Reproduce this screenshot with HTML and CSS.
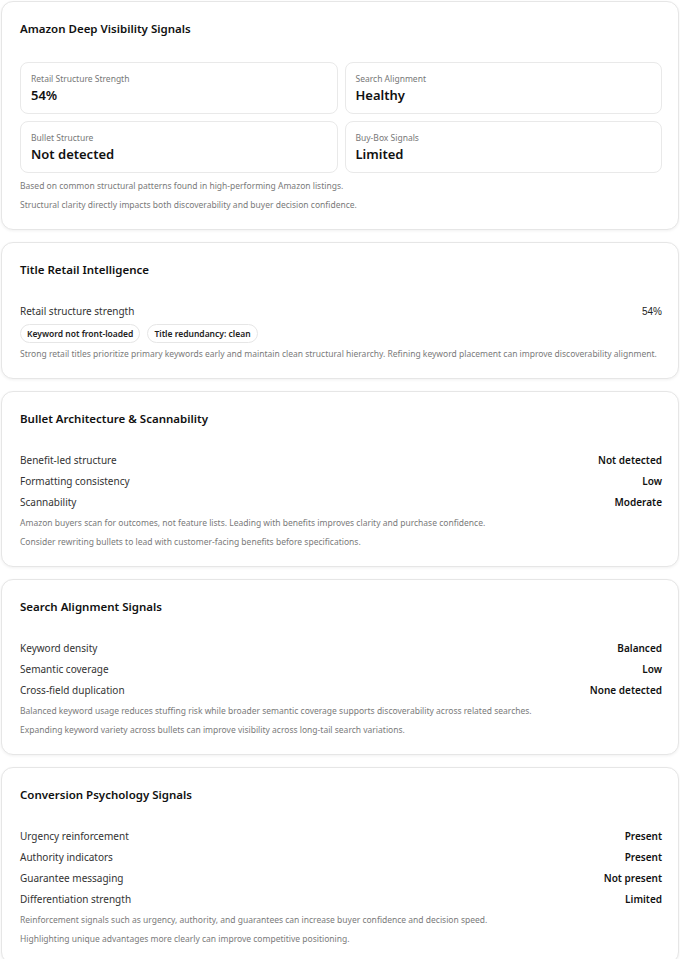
FILE: index.html
```html
<!DOCTYPE html>
<html lang="en">

<head>
  <meta charset="UTF-8">
  <meta name="viewport" content="width=device-width, initial-scale=1.0">
  <title>Amazon Listing Signals</title>
  <link rel="stylesheet" href="styles.css">
</head>

<body>
  <div class="report">

    <div class="card">
      <h3 class="card-title">Amazon Deep Visibility Signals</h3>
      <div class="metrics">
        <div class="metric">
          <span class="metric-label">Retail Structure Strength</span>
          <span class="metric-value">54%</span>
        </div>
        <div class="metric">
          <span class="metric-label">Search Alignment</span>
          <span class="metric-value">Healthy</span>
        </div>
        <div class="metric">
          <span class="metric-label">Bullet Structure</span>
          <span class="metric-value">Not detected</span>
        </div>
        <div class="metric">
          <span class="metric-label">Buy-Box Signals</span>
          <span class="metric-value">Limited</span>
        </div>
      </div>
      <p class="note">Based on common structural patterns found in high-performing Amazon listings.</p>
      <p class="note">Structural clarity directly impacts both discoverability and buyer decision confidence.</p>
    </div>

    <div class="card">
      <h3 class="card-title">Title Retail Intelligence</h3>
      <div class="row">
        <span class="row-label">Retail structure strength</span>
        <span class="row-score">54%</span>
      </div>
      <div class="pills">
        <span class="pill">Keyword not front-loaded</span>
        <span class="pill">Title redundancy: clean</span>
      </div>
      <p class="note">Strong retail titles prioritize primary keywords early and maintain clean structural hierarchy. Refining keyword placement can improve discoverability alignment.</p>
    </div>

    <div class="card">
      <h3 class="card-title">Bullet Architecture &amp; Scannability</h3>
      <div class="row">
        <span class="row-label">Benefit-led structure</span>
        <span class="row-value">Not detected</span>
      </div>
      <div class="row">
        <span class="row-label">Formatting consistency</span>
        <span class="row-value">Low</span>
      </div>
      <div class="row">
        <span class="row-label">Scannability</span>
        <span class="row-value">Moderate</span>
      </div>
      <p class="note">Amazon buyers scan for outcomes, not feature lists. Leading with benefits improves clarity and purchase confidence.</p>
      <p class="note">Consider rewriting bullets to lead with customer-facing benefits before specifications.</p>
    </div>

    <div class="card">
      <h3 class="card-title">Search Alignment Signals</h3>
      <div class="row">
        <span class="row-label">Keyword density</span>
        <span class="row-value">Balanced</span>
      </div>
      <div class="row">
        <span class="row-label">Semantic coverage</span>
        <span class="row-value">Low</span>
      </div>
      <div class="row">
        <span class="row-label">Cross-field duplication</span>
        <span class="row-value">None detected</span>
      </div>
      <p class="note">Balanced keyword usage reduces stuffing risk while broader semantic coverage supports discoverability across related searches.</p>
      <p class="note">Expanding keyword variety across bullets can improve visibility across long-tail search variations.</p>
    </div>

    <div class="card">
      <h3 class="card-title">Conversion Psychology Signals</h3>
      <div class="row">
        <span class="row-label">Urgency reinforcement</span>
        <span class="row-value">Present</span>
      </div>
      <div class="row">
        <span class="row-label">Authority indicators</span>
        <span class="row-value">Present</span>
      </div>
      <div class="row">
        <span class="row-label">Guarantee messaging</span>
        <span class="row-value">Not present</span>
      </div>
      <div class="row">
        <span class="row-label">Differentiation strength</span>
        <span class="row-value">Limited</span>
      </div>
      <p class="note">Reinforcement signals such as urgency, authority, and guarantees can increase buyer confidence and decision speed.</p>
      <p class="note">Highlighting unique advantages more clearly can improve competitive positioning.</p>
    </div>

  </div>
</body>

</html>
```

FILE: styles.css
```css
* {
  margin: 0;
  padding: 0;
  box-sizing: border-box;
}

body {
  font-family: 'Noto Sans', 'Open Sans', sans-serif;
  color: #222;
  background: #fff;
}

.report {
  display: flex;
  flex-direction: column;
  gap: 12.5px;
  padding: 1px 1px 0 1px;
}

.card {
  background: #fff;
  border: 1px solid #e6e6e6;
  border-radius: 12px;
  box-shadow: 0 1px 3px rgba(0, 0, 0, 0.06);
  padding: 19px 16px 15px 18px;
}

.card-title {
  font-size: 11.5px;
  font-weight: 600;
  line-height: 16px;
  color: #111;
  margin-bottom: 22.5px;
}

/* top summary tiles */
.metrics {
  display: grid;
  grid-template-columns: 1fr 1fr;
  gap: 7px;
  margin-top: 25px;
  margin-bottom: 2.5px;
}

.metric {
  display: flex;
  flex-direction: column;
  height: 52px;
  padding: 9px 10px;
  border: 1px solid #e9e9e9;
  border-radius: 8px;
}

.metric-label {
  font-size: 8.5px;
  line-height: 14px;
  color: #777;
}

.metric-value {
  font-size: 13px;
  font-weight: 600;
  line-height: 19px;
  color: #111;
}

.row {
  display: flex;
  justify-content: space-between;
  align-items: center;
  height: 21px;
  font-size: 10px;
}

.row-label {
  color: #333;
}

.row-value {
  font-weight: 600;
  color: #111;
}

.row-score {
  font-family: 'Liberation Sans', Arial, sans-serif;
  color: #222;
}

.pills {
  display: flex;
  gap: 7px;
  margin-top: 2px;
  margin-bottom: 1px;
}

.pill {
  font-size: 8.5px;
  font-weight: 600;
  line-height: 17px;
  padding: 0 6px;
  border: 1px solid #e6e6e6;
  border-radius: 999px;
  color: #222;
}

.note {
  font-size: 8.5px;
  line-height: 19px;
  color: #7a7a7a;
}
```
